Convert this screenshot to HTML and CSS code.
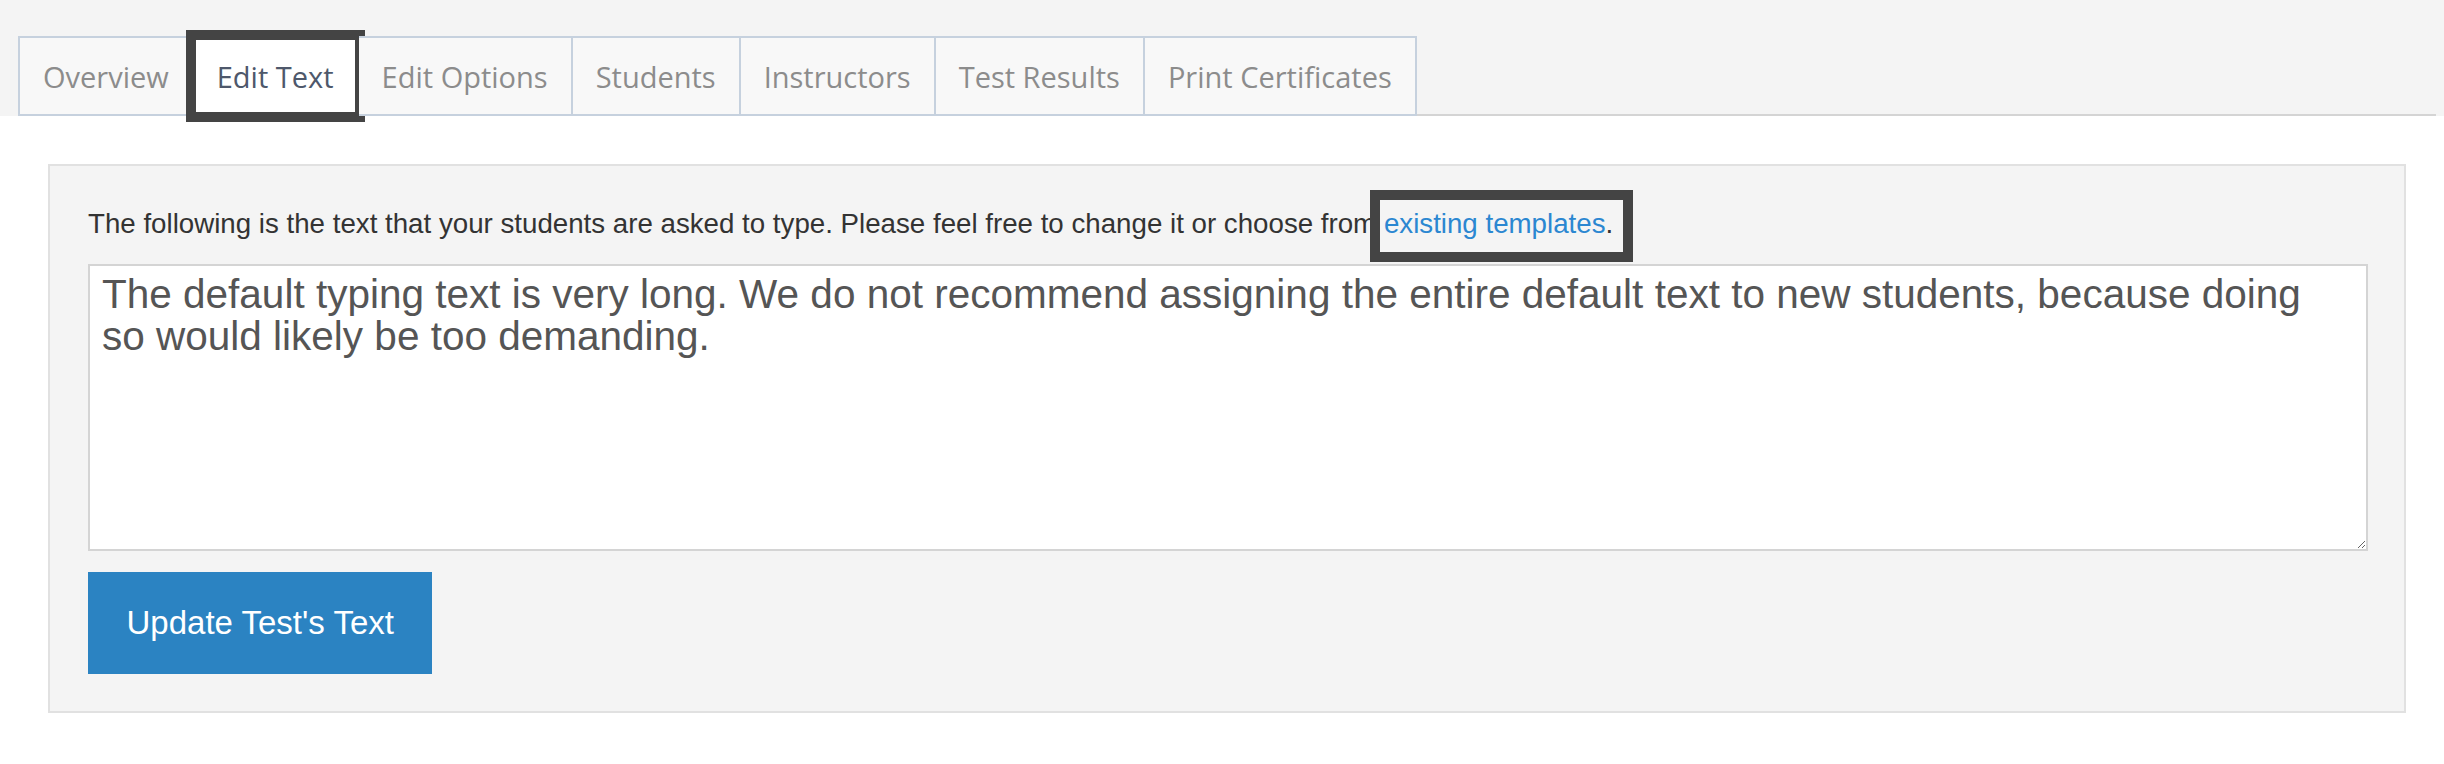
FILE: index.html
```html
<!DOCTYPE html>
<html lang="en">
<head>
<meta charset="utf-8">
<title>Edit Text</title>
<link rel="stylesheet" href="styles.css">
</head>
<body>
<header class="top">
  <ul class="tabs">
    <li class="tab">Overview</li>
    <li class="tab tab-active">Edit Text<span class="mark mark-tab"></span></li>
    <li class="tab">Edit Options</li>
    <li class="tab">Students</li>
    <li class="tab">Instructors</li>
    <li class="tab">Test Results</li>
    <li class="tab">Print Certificates</li>
  </ul>
</header>
<main class="content">
  <section class="panel">
    <p class="intro">The following is the text that your students are asked to type. Please feel free to change it or choose from <span class="link-wrap"><a class="link" href="#">existing templates</a>.<span class="mark mark-link"></span></span></p>
    <textarea class="text-input">The default typing text is very long. We do not recommend assigning the entire default text to new students, because doing so would likely be too demanding.</textarea>
    <button class="btn" type="button">Update Test's Text</button>
  </section>
</main>
</body>
</html>
```

FILE: styles.css
```css
html, body {
  margin: 0;
  padding: 0;
  background: #ffffff;
}

body {
  font-family: "Liberation Sans", Arial, sans-serif;
  color: #333333;
}

.top {
  background: #f4f4f4;
  padding: 36px 8px 0 18px;
}

.tabs {
  display: flex;
  list-style: none;
  margin: 0;
  padding: 0;
  border-bottom: 2px solid #d4d4d4;
}

.tab {
  position: relative;
  box-sizing: border-box;
  height: 80px;
  margin-bottom: -2px;
  display: flex;
  align-items: center;
  padding: 0 23px;
  font-family: "Open Sans", sans-serif;
  font-size: 29px;
  color: #8c8c8c;
  background: #f8f8f8;
  border: 2px solid #c6d1de;
  border-left: none;
}

.tab:first-child {
  border-left: 2px solid #c6d1de;
}

.tab-active {
  background: #ffffff;
  color: #4e586b;
  border-bottom-color: #ffffff;
}

.mark {
  position: absolute;
  border: 10px solid #444444;
  pointer-events: none;
}

.mark-tab {
  left: -8px;
  right: -8px;
  top: -8px;
  bottom: -8px;
}

.content {
  padding: 48px 38px 40px 48px;
}

.panel {
  background: #f4f4f4;
  border: 2px solid #e1e1e1;
  padding: 39px 36px 37px 38px;
}

.intro {
  margin: 0 0 22px 0;
  font-size: 27.7px;
  line-height: 37px;
  color: #333333;
}

.link-wrap {
  position: relative;
}

.link {
  color: #2b87d1;
  text-decoration: none;
}

.mark-link {
  left: -14px;
  right: -20px;
  top: -18px;
  bottom: -23px;
}

.text-input {
  display: block;
  box-sizing: border-box;
  width: 100%;
  height: 287px;
  margin: 0;
  padding: 7px 40px 7px 12px;
  border: 2px solid #d4d4d4;
  border-radius: 0;
  background: #ffffff;
  font-family: "Liberation Sans", Arial, sans-serif;
  font-size: 40.5px;
  line-height: 42px;
  color: #555555;
  resize: both;
}

.btn {
  display: block;
  margin-top: 21px;
  height: 102px;
  padding: 0 38.5px;
  border: none;
  border-radius: 0;
  background: #2b83c2;
  color: #ffffff;
  font-family: "Liberation Sans", Arial, sans-serif;
  font-size: 33px;
}
```
